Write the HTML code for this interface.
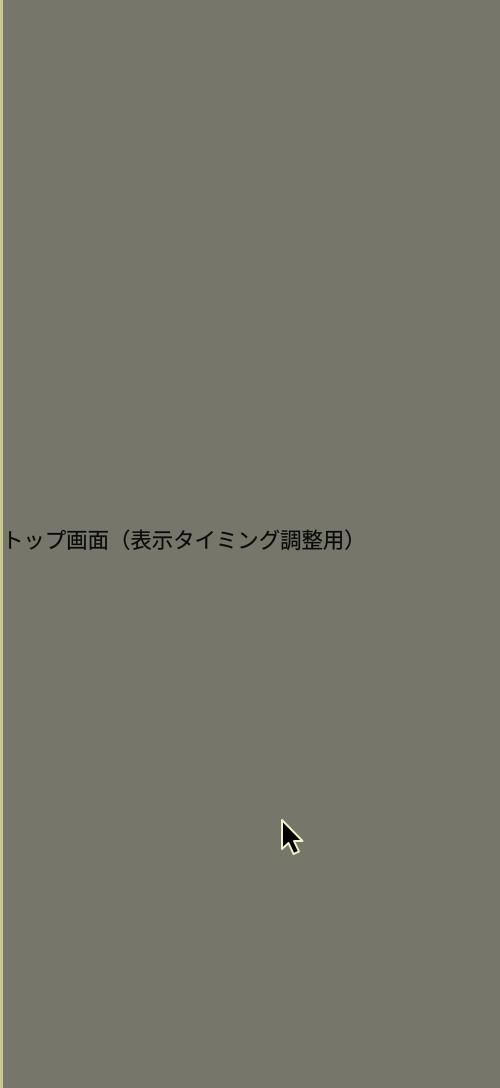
<!DOCTYPE html>
<html><head><meta charset="utf-8"><style>
html,body{margin:0;padding:0;width:500px;height:1088px;overflow:hidden;background:#76776a;}
.strip{position:absolute;left:0;top:0;width:3px;height:1088px;background:#c9c98e;}
.t{position:absolute;left:2px;top:528px;font-family:"Liberation Sans","Noto Sans CJK JP",sans-serif;font-size:21.4px;line-height:26px;color:#0a0a0a;white-space:nowrap;-webkit-text-stroke:0.2px #0a0a0a;}
svg{position:absolute;left:279px;top:818px;}
</style></head><body>
<div class="strip"></div>
<div class="t">トップ画面（表示タイミング調整用）</div>
<svg width="28" height="42" viewBox="0 0 28 42"><path d="M3 2 L3 31 L9.5 25 L14.5 36 L20 33.5 L15 23 L23.5 23 Z" fill="#000" stroke="#f4f0c8" stroke-width="2" stroke-linejoin="round"/></svg>
</body></html>
